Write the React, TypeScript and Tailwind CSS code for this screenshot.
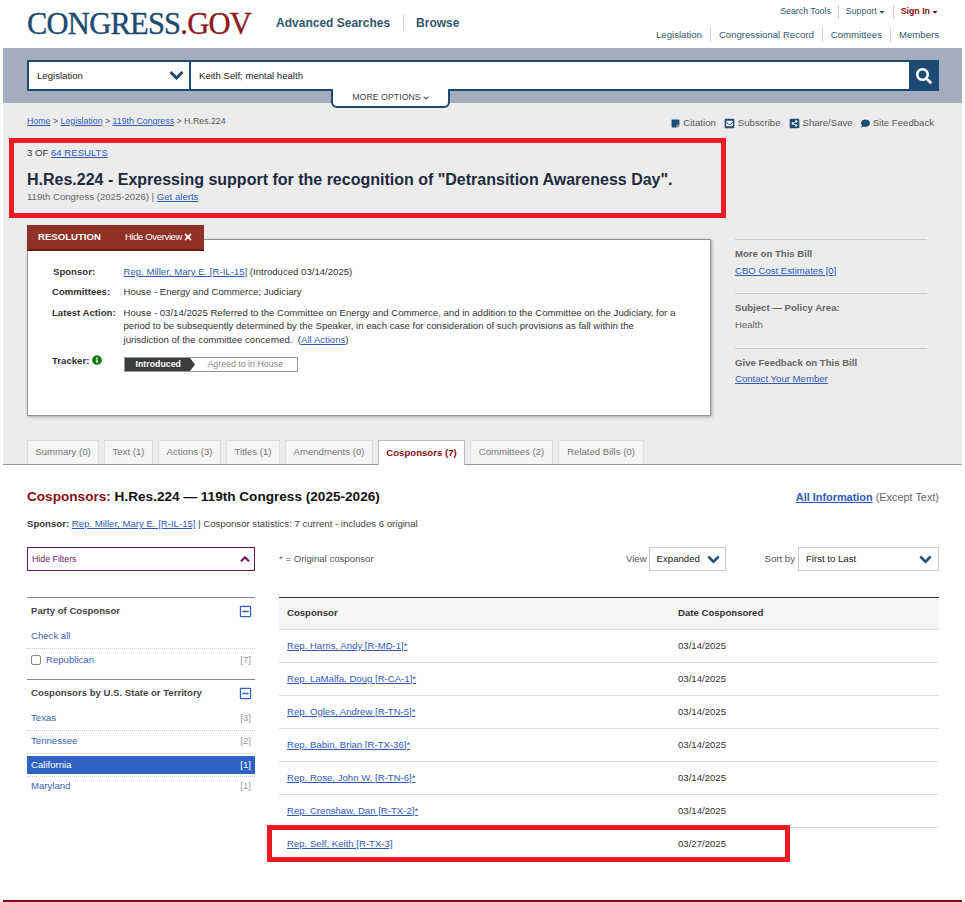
import React from 'react'
import { FaChevronDown, FaChevronUp, FaSearch, FaTimes, FaInfoCircle, FaCaretDown, FaComment, FaRegMinusSquare, FaStickyNote, FaShareAltSquare, FaEnvelopeSquare } from 'react-icons/fa'

const link = 'text-[#2f5bb7] underline'

const tabs = [
  { label: 'Summary (0)', w: 'w-[72px]' },
  { label: 'Text (1)', w: 'w-[49px]' },
  { label: 'Actions (3)', w: 'w-[63px]' },
  { label: 'Titles (1)', w: 'w-[54px]' },
  { label: 'Amendments (0)', w: 'w-[88px]' },
  { label: 'Cosponsors (7)', w: 'w-[87px]', active: true },
  { label: 'Committees (2)', w: 'w-[83px]' },
  { label: 'Related Bills (0)', w: 'w-[86px]' },
]

const rows = [
  { name: 'Rep. Harris, Andy [R-MD-1]*', date: '03/14/2025' },
  { name: 'Rep. LaMalfa, Doug [R-CA-1]*', date: '03/14/2025' },
  { name: 'Rep. Ogles, Andrew [R-TN-5]*', date: '03/14/2025' },
  { name: 'Rep. Babin, Brian [R-TX-36]*', date: '03/14/2025' },
  { name: 'Rep. Rose, John W. [R-TN-6]*', date: '03/14/2025' },
  { name: 'Rep. Crenshaw, Dan [R-TX-2]*', date: '03/14/2025' },
]

function Sep() {
  return <span className="w-px h-[14px] bg-[#d0d0d0]" />
}

export default function App() {
  return (
    <div className="w-[965px] h-[902px] overflow-hidden bg-white px-[3px] text-[9.6px] text-[#333] font-['Liberation_Sans',Arial,sans-serif]">
      <div className="relative h-[902px] bg-white">
        {/* Header */}
        <header className="h-[48px] flex justify-between pl-[24px] pr-[23px]">
          <div className="flex items-start">
            <div className="mt-[6px] text-[30.5px] leading-[36px] tracking-[-0.75px] [-webkit-text-stroke:0.4px] font-['Liberation_Serif',serif] text-[#1d4a70]">
              CONGRESS<span className="text-[#8c1c24]">.GOV</span>
            </div>
            <nav className="ml-[25px] mt-[15px] flex items-center text-[12px] font-bold text-[#34566f] leading-[16px]">
              <span>Advanced Searches</span>
              <span className="mx-[12.5px] w-px h-[16px] bg-[#d0d0d0]" />
              <span>Browse</span>
            </nav>
          </div>
          <div className="flex flex-col items-end text-[#34566f]">
            <div className="mt-[4px] h-[16px] flex items-center gap-[7px] text-[8.8px]">
              <span>Search Tools</span>
              <Sep />
              <span className="flex items-center gap-[1px]">Support <FaCaretDown className="text-[8px]" /></span>
              <Sep />
              <span className="flex items-center gap-[1px] font-bold text-[#8a0a14]">Sign In <FaCaretDown className="text-[8px]" /></span>
            </div>
            <div className="mt-[6px] h-[16px] flex items-center gap-[8px] text-[9.6px] translate-y-[1px]">
              <span>Legislation</span>
              <Sep />
              <span>Congressional Record</span>
              <Sep />
              <span>Committees</span>
              <Sep />
              <span>Members</span>
            </div>
          </div>
        </header>

        {/* Search */}
        <div className="relative h-[55px] bg-[#a4adbd] pl-[24px] pr-[23px] pt-[12px]">
          <div className="flex h-[31px] border-y-2 border-l-2 border-[#1d4a70] bg-white text-[#222]">
            <div className="w-[162px] flex items-center justify-between pl-[8px] pr-[5px] border-r-2 border-[#1d4a70]">
              <span className="pt-[1px]">Legislation</span>
              <FaChevronDown className="text-[15px] text-[#1d4a70] stroke-[30]" />
            </div>
            <div className="flex-1 flex items-center pl-[8px] pt-[1px]">Keith Self; mental health</div>
            <div className="w-[30px] -my-[2px] flex items-center justify-center bg-[#1d4a70] text-white">
              <FaSearch className="text-[16px]" />
            </div>
          </div>
          <div className="absolute left-[328px] top-[41px] w-[119px] h-[19px] flex items-center justify-center gap-[2px] bg-white border-x-2 border-b-2 border-[#1d4a70] rounded-b-[6px] text-[8.8px] text-[#444]">
            MORE OPTIONS <FaChevronDown className="text-[6px]" />
          </div>
        </div>

        {/* Gray section */}
        <div className="h-[362px] bg-[#ececec] border-b border-[#999]">
          <div className="flex justify-between pl-[24px] pr-[28px] pt-[12px] h-[35px]">
            <div className="text-[8.8px] leading-[12px] text-[#555]">
              <span className={link}>Home</span> &gt; <span className={link}>Legislation</span> &gt; <span className={link}>119th Congress</span> &gt; H.Res.224
            </div>
            <div className="flex items-center h-[14px] gap-[8px] mt-[1px] text-[#555]">
              <span className="flex items-center gap-[3px]"><FaStickyNote className="text-[9px] text-[#1d4a70]" />Citation</span>
              <span className="flex items-center gap-[3px]"><FaEnvelopeSquare className="text-[11px] text-[#1d4a70]" />Subscribe</span>
              <span className="flex items-center gap-[3px]"><FaShareAltSquare className="text-[11px] text-[#1d4a70]" />Share/Save</span>
              <span className="flex items-center gap-[3px]"><FaComment className="text-[9px] text-[#1d4a70]" />Site Feedback</span>
            </div>
          </div>

          {/* Title block */}
          <div className="ml-[6px] w-[717px] h-[80px] border-[5px] border-[#ed1c24] pl-[13px] pt-[4px]">
            <div className="leading-[12px] text-[#333]">3 OF <span className={link}>64 RESULTS</span></div>
            <h1 className="mt-[11px] text-[16px] leading-[20px] font-bold text-[#1e2a3e]">H.Res.224 - Expressing support for the recognition of "Detransition Awareness Day".</h1>
            <div className="mt-[1px] leading-[12px] text-[#666]">119th Congress (2025-2026) | <span className={link}>Get alerts</span></div>
          </div>

          <div className="flex mt-[7px] pl-[24px]">
            {/* Overview */}
            <div className="relative mt-[14px] w-[684px] h-[177px] bg-white border border-[#8e959c] shadow-[1px_1px_3px_rgba(0,0,0,0.3)]">
              <div className="absolute -left-px -top-[15px] w-[177px] h-[26px] flex items-center bg-[#8f3127] border-b-2 border-[#6b1a12] text-white pl-[11px]">
                <span className="font-bold">RESOLUTION</span>
                <span className="ml-[24px] flex items-center gap-[1px] tracking-[-0.4px]">Hide Overview <FaTimes className="text-[10px]" /></span>
              </div>
              <div className="pt-[25px] pl-[24px] pr-[30px] leading-[13.3px] text-[#333]">
                <div className="flex h-[20px]">
                  <div className="w-[71.5px] font-bold pl-[1px]">Sponsor:</div>
                  <div><span className={link}>Rep. Miller, Mary E. [R-IL-15]</span> (Introduced 03/14/2025)</div>
                </div>
                <div className="flex h-[21px]">
                  <div className="w-[71.5px] font-bold">Committees:</div>
                  <div>House - Energy and Commerce; Judiciary</div>
                </div>
                <div className="flex h-[48px]">
                  <div className="w-[71.5px] font-bold shrink-0">Latest Action:</div>
                  <div>House - 03/14/2025 Referred to the Committee on Energy and Commerce, and in addition to the Committee on the Judiciary, for a period to be subsequently determined by the Speaker, in each case for consideration of such provisions as fall within the jurisdiction of the committee concerned.&nbsp; (<span className={link}>All Actions</span>)</div>
                </div>
                <div className="flex">
                  <div className="w-[71.5px] flex items-start gap-[3px] font-bold">Tracker: <FaInfoCircle className="mt-[1px] text-[10px] text-[#137a13]" /></div>
                  <div className="relative mt-[3px] w-[174px] h-[15px] flex items-center border border-[#999] bg-white text-[8.8px] text-[#888]">
                    <span className="w-[65px] h-full flex items-center pl-[11px] bg-[#3c3c3c] text-white font-bold">Introduced</span>
                    <svg className="h-full w-[5px]" viewBox="0 0 5 13" preserveAspectRatio="none"><path d="M0 0L5 6.5L0 13Z" fill="#3c3c3c" /></svg>
                    <span className="ml-[13px]">Agreed to in House</span>
                  </div>
                </div>
              </div>
            </div>

            {/* Sidebar */}
            <aside className="ml-[24px] w-[192px] mt-[14px] text-[#666]">
              <div className="border-t border-[#ccc] h-[54px] pt-[8px]">
                <div className="font-bold leading-[12px]">More on This Bill</div>
                <div className={`mt-[5px] leading-[12px] ${link}`}>CBO Cost Estimates [0]</div>
              </div>
              <div className="border-t border-[#ccc] h-[55px] pt-[8px]">
                <div className="font-bold leading-[12px]">Subject — Policy Area:</div>
                <div className="mt-[5px] leading-[12px]">Health</div>
              </div>
              <div className="border-t border-[#ccc] pt-[8px]">
                <div className="font-bold leading-[12px]">Give Feedback on This Bill</div>
                <div className={`mt-[4px] leading-[12px] ${link}`}>Contact Your Member</div>
              </div>
            </aside>
          </div>

          {/* Tabs */}
          <div className="mt-[24px] pl-[24px] flex gap-[5px] items-start">
            {tabs.map((t) => (
              <div
                key={t.label}
                className={`${t.w} flex items-center justify-center border border-b-0 ${t.active ? 'h-[25px] bg-white border-[#bbb] text-[#8a0a14] font-bold relative' : 'h-[24px] bg-[#f4f4f4] border-[#ddd] text-[#777]'}`}
              >
                {t.label}
              </div>
            ))}
          </div>
        </div>

        {/* Cosponsors */}
        <section className="pl-[24px] pr-[23px]">
          <div className="flex justify-between items-center pt-[24px] h-[40px]">
            <h2 className="text-[13.6px] font-bold text-[#111] leading-[18px]"><span className="text-[#8a0a14]">Cosponsors:</span> H.Res.224 — 119th Congress (2025-2026)</h2>
            <div className="text-[10.9px] text-[#666]"><span className={`font-bold ${link}`}>All Information</span> (Except Text)</div>
          </div>
          <div className="mt-[13px] leading-[12px] text-[#444]">
            <span className="font-bold text-[#333]">Sponsor:</span> <span className={link}>Rep. Miller, Mary E. [R-IL-15]</span> | Cosponsor statistics: 7 current - includes 6 original
          </div>

          <div className="flex mt-[17px]">
            {/* Filters */}
            <aside className="w-[228px] shrink-0">
              <div className="h-[24px] flex items-center justify-between pl-[4px] pr-[4px] border border-[#6b1a5f] text-[8.8px] text-[#6b1a5f]">
                <span className="pt-[1px]">Hide Filters</span>
                <FaChevronUp className="text-[10px] stroke-[40]" />
              </div>
              <div className="mt-[26px] border-t border-[#888] h-[82px]">
                <div className="flex items-center justify-between pl-[4px] pr-[3px] h-[27px]">
                  <span className="font-bold text-[#444]">Party of Cosponsor</span>
                  <FaRegMinusSquare className="text-[13px] text-[#2f62c4]" />
                </div>
                <div className="h-[24px] pb-[1px] flex items-center px-[4px] text-[#3a62b5] border-b border-dotted border-[#ccc]">Check all</div>
                <div className="h-[24px] pb-[2px] flex items-center justify-between px-[4px] text-[#3a62b5]">
                  <span className="flex items-center gap-[5px]"><span className="w-[10px] h-[10px] border border-[#888] rounded-[2px] bg-white" />Republican</span>
                  <span className="text-[#999]">[7]</span>
                </div>
              </div>
              <div className="border-t border-[#888]">
                <div className="flex items-center justify-between pl-[4px] pr-[3px] h-[27px]">
                  <span className="font-bold text-[#444]">Cosponsors by U.S. State or Territory</span>
                  <FaRegMinusSquare className="text-[13px] text-[#2f62c4]" />
                </div>
                <div className="h-[24px] pb-[1px] flex items-center justify-between px-[4px] text-[#3a62b5] border-b border-dotted border-[#ccc]">
                  <span>Texas</span><span className="text-[#999]">[3]</span>
                </div>
                <div className="h-[23px] pb-[2px] flex items-center justify-between px-[4px] text-[#3a62b5] border-b border-dotted border-[#ccc]">
                  <span>Tennessee</span><span className="text-[#999]">[2]</span>
                </div>
                <div className="py-[2px] border-b border-dotted border-[#ccc]">
                  <div className="h-[18px] flex items-center justify-between px-[4px] bg-[#2f62c4] text-white">
                    <span>California</span><span>[1]</span>
                  </div>
                </div>
                <div className="h-[19px] flex items-center justify-between px-[4px] text-[#3a62b5]">
                  <span>Maryland</span><span className="text-[#999]">[1]</span>
                </div>
              </div>
            </aside>

            {/* Table */}
            <div className="ml-[24px] flex-1">
              <div className="h-[24px] flex items-center text-[#555]">
                <span>* = Original cosponsor</span>
                <span className="ml-auto mr-[2px]">View</span>
                <div className="w-[77px] h-[24px] flex items-center justify-between pl-[7px] pr-[5px] border border-[#ccc] text-[#222]">
                  <span className="pt-[1px]">Expanded</span>
                  <FaChevronDown className="text-[13px] text-[#1d4a70] stroke-[30]" />
                </div>
                <span className="ml-[39px] mr-[3px]">Sort by</span>
                <div className="w-[141px] h-[24px] flex items-center justify-between pl-[7px] pr-[6px] border border-[#ccc] text-[#222]">
                  <span className="pt-[1px]">First to Last</span>
                  <FaChevronDown className="text-[13px] text-[#1d4a70] stroke-[30]" />
                </div>
              </div>
              <div className="mt-[26px] border-t border-[#333]">
                <div className="flex h-[32px] items-center bg-[#f5f5f5] border-b border-[#ddd] font-bold text-[#333]">
                  <div className="w-[399px] pl-[8px]">Cosponsor</div>
                  <div>Date Cosponsored</div>
                </div>
                {rows.map((r) => (
                  <div key={r.name} className="flex h-[33px] items-center border-b border-[#ddd]">
                    <div className="w-[399px] pl-[8px]"><span className={link}>{r.name}</span></div>
                    <div className="text-[#333]">{r.date}</div>
                  </div>
                ))}
                <div className="relative flex h-[33px] items-center">
                  <div className="w-[399px] pl-[8px]"><span className={link}>Rep. Self, Keith [R-TX-3]</span></div>
                  <div className="text-[#333]">03/27/2025</div>
                  <div className="absolute left-[-12px] top-[-3px] w-[523px] h-[37px] border-[5px] border-[#ed1c24]" />
                </div>
              </div>
            </div>
          </div>
        </section>

        <div className="absolute bottom-0 left-0 right-0 h-[2px] bg-[#8a0a14]" />
      </div>
    </div>
  )
}
